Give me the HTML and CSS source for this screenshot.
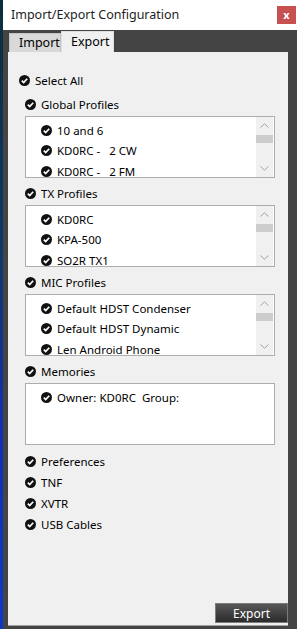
FILE: index.html
```html
<!DOCTYPE html>
<html lang="en">
<head>
    <meta charset="UTF-8">
    <meta name="viewport" content="width=device-width, initial-scale=1.0">
    <title>Import/Export Configuration</title>
    <link rel="stylesheet" href="styles.css">
</head>
<body>
    <svg width="0" height="0" class="defs">
        <symbol id="chk" viewBox="0 0 11 11">
            <circle cx="5.5" cy="5.5" r="5.5" fill="#111"/>
            <polyline points="2.8,5.7 4.7,7.6 8.2,3.7" fill="none" stroke="#fff" stroke-width="1.7"/>
        </symbol>
        <symbol id="up" viewBox="0 0 9 5">
            <polyline points="0.5,4.5 4.5,0.8 8.5,4.5" fill="none" stroke="#a3a3a3" stroke-width="1"/>
        </symbol>
        <symbol id="down" viewBox="0 0 9 5">
            <polyline points="0.5,0.5 4.5,4.2 8.5,0.5" fill="none" stroke="#a3a3a3" stroke-width="1"/>
        </symbol>
    </svg>

    <div class="desk"></div>
    <div class="window">
        <div class="titlebar">
            <span class="title">Import/Export Configuration</span>
            <div class="close">x</div>
        </div>
        <div class="frame">
            <div class="tabs">
                <div class="tab">Import</div>
                <div class="tab active">Export</div>
            </div>
            <div class="panel">
                <div class="row"><svg class="check"><use href="#chk"/></svg><span>Select All</span></div>

                <div class="group">
                    <div class="row"><svg class="check"><use href="#chk"/></svg><span>Global Profiles</span></div>
                    <div class="listbox">
                        <div class="items">
                            <div class="row item"><svg class="check"><use href="#chk"/></svg><span>10 and 6</span></div>
                            <div class="row item"><svg class="check"><use href="#chk"/></svg><span>KD0RC -&nbsp;&nbsp; 2 CW</span></div>
                            <div class="row item"><svg class="check"><use href="#chk"/></svg><span>KD0RC -&nbsp;&nbsp; 2 FM</span></div>
                        </div>
                        <div class="scroll">
                            <div class="sb-btn"><svg class="arrow"><use href="#up"/></svg></div>
                            <div class="thumb"></div>
                            <div class="track"></div>
                            <div class="sb-btn"><svg class="arrow"><use href="#down"/></svg></div>
                        </div>
                    </div>
                </div>

                <div class="group">
                    <div class="row"><svg class="check"><use href="#chk"/></svg><span>TX Profiles</span></div>
                    <div class="listbox">
                        <div class="items">
                            <div class="row item"><svg class="check"><use href="#chk"/></svg><span>KD0RC</span></div>
                            <div class="row item"><svg class="check"><use href="#chk"/></svg><span>KPA-500</span></div>
                            <div class="row item"><svg class="check"><use href="#chk"/></svg><span>SO2R TX1</span></div>
                        </div>
                        <div class="scroll">
                            <div class="sb-btn"><svg class="arrow"><use href="#up"/></svg></div>
                            <div class="thumb"></div>
                            <div class="track"></div>
                            <div class="sb-btn"><svg class="arrow"><use href="#down"/></svg></div>
                        </div>
                    </div>
                </div>

                <div class="group">
                    <div class="row"><svg class="check"><use href="#chk"/></svg><span>MIC Profiles</span></div>
                    <div class="listbox">
                        <div class="items">
                            <div class="row item"><svg class="check"><use href="#chk"/></svg><span>Default HDST Condenser</span></div>
                            <div class="row item"><svg class="check"><use href="#chk"/></svg><span>Default HDST Dynamic</span></div>
                            <div class="row item"><svg class="check"><use href="#chk"/></svg><span>Len Android Phone</span></div>
                        </div>
                        <div class="scroll">
                            <div class="sb-btn"><svg class="arrow"><use href="#up"/></svg></div>
                            <div class="thumb"></div>
                            <div class="track"></div>
                            <div class="sb-btn"><svg class="arrow"><use href="#down"/></svg></div>
                        </div>
                    </div>
                </div>

                <div class="group">
                    <div class="row"><svg class="check"><use href="#chk"/></svg><span>Memories</span></div>
                    <div class="listbox">
                        <div class="items">
                            <div class="row item"><svg class="check"><use href="#chk"/></svg><span>Owner: KD0RC&nbsp; Group:</span></div>
                        </div>
                    </div>
                </div>

                <div class="extras">
                    <div class="row wide"><svg class="check"><use href="#chk"/></svg><span>Preferences</span></div>
                    <div class="row wide"><svg class="check"><use href="#chk"/></svg><span>TNF</span></div>
                    <div class="row wide"><svg class="check"><use href="#chk"/></svg><span>XVTR</span></div>
                    <div class="row wide"><svg class="check"><use href="#chk"/></svg><span>USB Cables</span></div>
                </div>

                <button class="export-btn">Export</button>
            </div>
        </div>
    </div>
</body>
</html>
```

FILE: styles.css
```css
body {
    margin: 0;
    width: 297px;
    height: 629px;
    overflow: hidden;
    display: flex;
    background-color: #444;
    font-family: "Noto Sans", "Open Sans", sans-serif;
    color: #000;
}

.defs {
    position: absolute;
}

.desk {
    width: 3px;
    background: linear-gradient(#0c2d3a, #0b3a6a 40%, #1030b8 70%, #0c38c8);
}

.window {
    flex: 1;
    display: flex;
    flex-direction: column;
}

.titlebar {
    height: 30px;
    background-color: #fff;
    display: flex;
    align-items: center;
    padding-left: 8px;
}

.title {
    font-size: 12.5px;
    color: #1e1e1e;
    margin-top: -1px;
}

.close {
    margin-left: auto;
    margin-right: 1px;
    width: 19px;
    height: 18px;
    background-color: #c75050;
    color: #fff;
    font-size: 11px;
    font-weight: bold;
    display: flex;
    align-items: center;
    justify-content: center;
    line-height: 1;
    padding-bottom: 2px;
    box-sizing: border-box;
}

.frame {
    flex: 1;
    display: flex;
    flex-direction: column;
    padding: 1px 9px 3px 5px;
}

.tabs {
    height: 21px;
    display: flex;
    align-items: flex-end;
    padding-left: 1px;
}

.tab {
    width: 52px;
    height: 19px;
    box-sizing: border-box;
    background-color: #d9d9d9;
    border: 1px solid #c4c4c4;
    border-bottom: none;
    font-size: 12.5px;
    padding-left: 9px;
    line-height: 18px;
}

.tab.active {
    width: 53px;
    height: 21px;
    background-color: #f0f0f0;
    border-color: #e0e0e0;
    line-height: 20px;
}

.panel {
    flex: 1;
    display: flex;
    flex-direction: column;
    background-color: #f0f0f0;
    padding: 18px 0 2px 11px;
    border-bottom: 1px solid #a0a0a0;
}

.row {
    height: 20px;
    display: flex;
    align-items: center;
    gap: 5px;
    font-size: 11.5px;
    white-space: nowrap;
}

.check {
    width: 11px;
    height: 11px;
    flex: none;
}

.group {
    margin: 4px 0 1px 6px;
}

.listbox {
    height: 62px;
    box-sizing: border-box;
    margin: 2px 13px 0 0;
    border: 1px solid #adadad;
    background-color: #fff;
    display: flex;
    overflow: hidden;
}

.items {
    flex: 1;
    padding: 3px 0 0 15px;
    overflow: hidden;
}

.row.item {
    height: 20.5px;
}

.scroll {
    width: 17px;
    margin: 0 1px 0 0;
    background-color: #f0f0f0;
    display: flex;
    flex-direction: column;
}

.sb-btn {
    height: 17px;
    display: flex;
    align-items: center;
    justify-content: center;
}

.arrow {
    width: 9px;
    height: 5px;
}

.thumb {
    height: 8px;
    margin-top: 1px;
    background-color: #cdcdcd;
}

.track {
    flex: 1;
}

.extras {
    margin: 5px 0 0 6px;
}

.row.wide {
    height: 21px;
}

.export-btn {
    margin-top: auto;
    align-self: flex-end;
    width: 73px;
    height: 20px;
    background: linear-gradient(#585858, #2b2b2b);
    border: 1px solid #7c7c7c;
    color: #fff;
    font-family: "Noto Sans", sans-serif;
    font-size: 12px;
    padding: 0;
}
```
